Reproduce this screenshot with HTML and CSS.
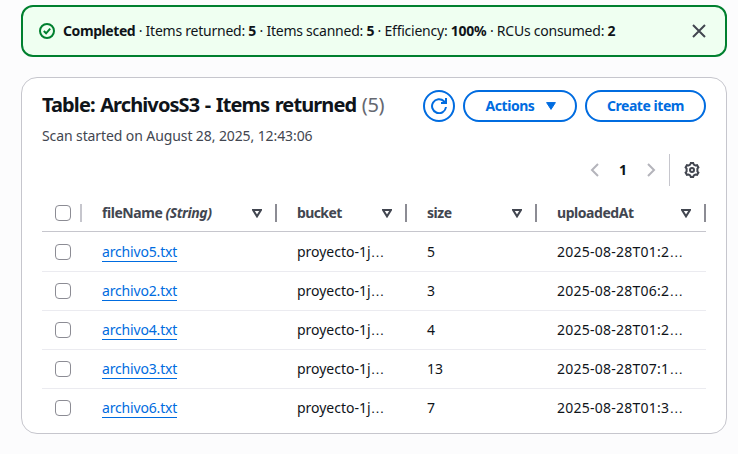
FILE: index.html
```html
<!DOCTYPE html>
<html lang="en">
<head>
<meta charset="utf-8">
<title>Table: ArchivosS3</title>
<link rel="stylesheet" href="styles.css">
</head>
<body>
<section class="alert">
  <svg class="alert-icon" viewBox="0 0 16 16"><circle cx="8" cy="8" r="7"/><path d="M4.8 8l2.3 2.3 4.1-4.6"/></svg>
  <p class="alert-text"><b class="done">Completed</b> · Items returned: <b>5</b> · Items scanned: <b>5</b> · Efficiency: <b>100%</b> · RCUs consumed: <b>2</b></p>
  <svg class="close" viewBox="0 0 16 16"><path d="M2 2l12 12M14 2L2 14"/></svg>
</section>
<main class="panel">
  <header class="head">
    <div class="titles">
      <h1>Table: ArchivosS3 - Items returned <span class="count">(5)</span></h1>
      <p class="sub">Scan started on August 28, 2025, 12:43:06</p>
    </div>
    <div class="actions">
      <button class="btn refresh"><svg viewBox="0 0 16 16"><path d="M15 9a7 7 0 1 1-2-5.8L15 5M15 0v5h-5"/></svg></button>
      <button class="btn menu"><span>Actions</span><svg class="caret" viewBox="0 0 10 8"><path d="M.6.6h8.8L5 7.4z"/></svg></button>
      <button class="btn create"><span>Create item</span></button>
    </div>
  </header>
  <nav class="pager">
    <svg class="chev" viewBox="0 0 16 16"><path d="M11 2L5 8l6 6"/></svg>
    <b class="page">1</b>
    <svg class="chev" viewBox="0 0 16 16"><path d="M5 2l6 6-6 6"/></svg>
    <span class="rule"></span>
    <svg class="gear" viewBox="0 0 16 16"><path d="M6.2 2.5L6.8 1h2.4l.6 1.5 1.7 1 1.6-.3 1.3 2.2-1 1.2v2.8l1 1.2-1.3 2.2-1.6-.3-1.7 1L9.2 15H6.8l-.6-1.5-1.7-1-1.6.3-1.3-2.2 1-1.2V6.6l-1-1.2 1.3-2.2 1.6.3z"/><circle cx="8" cy="8" r="2"/></svg>
  </nav>
  <div class="table">
    <div class="row th">
      <div class="cell pick"><span class="box"></span></div>
      <div class="cell"><span>fileName <i>(String)</i></span><svg class="sort" viewBox="0 0 10 9"><path d="M1 1h8L5 7.4z"/></svg></div>
      <div class="cell"><span class="tight">bucket</span><svg class="sort" viewBox="0 0 10 9"><path d="M1 1h8L5 7.4z"/></svg></div>
      <div class="cell"><span>size</span><svg class="sort" viewBox="0 0 10 9"><path d="M1 1h8L5 7.4z"/></svg></div>
      <div class="cell"><span>uploadedAt</span><svg class="sort" viewBox="0 0 10 9"><path d="M1 1h8L5 7.4z"/></svg></div>
    </div>
    <div class="row first"><div class="cell pick"><span class="box"></span></div><div class="cell"><a>archivo5.txt</a></div><div class="cell proj">proyecto-1j<span class="dots">…</span></div><div class="cell">5</div><div class="cell date">2025-08-28T01:2<span class="dots">…</span></div></div>
    <div class="row"><div class="cell pick"><span class="box"></span></div><div class="cell"><a>archivo2.txt</a></div><div class="cell proj">proyecto-1j<span class="dots">…</span></div><div class="cell">3</div><div class="cell date">2025-08-28T06:2<span class="dots">…</span></div></div>
    <div class="row"><div class="cell pick"><span class="box"></span></div><div class="cell"><a>archivo4.txt</a></div><div class="cell proj">proyecto-1j<span class="dots">…</span></div><div class="cell">4</div><div class="cell date">2025-08-28T01:2<span class="dots">…</span></div></div>
    <div class="row"><div class="cell pick"><span class="box"></span></div><div class="cell"><a>archivo3.txt</a></div><div class="cell proj">proyecto-1j<span class="dots">…</span></div><div class="cell">13</div><div class="cell date">2025-08-28T07:1<span class="dots">…</span></div></div>
    <div class="row"><div class="cell pick"><span class="box"></span></div><div class="cell"><a>archivo6.txt</a></div><div class="cell proj">proyecto-1j<span class="dots">…</span></div><div class="cell">7</div><div class="cell date">2025-08-28T01:3<span class="dots">…</span></div></div>
  </div>
</main>
</body>
</html>
```
FILE: styles.css
```css
* { box-sizing: border-box; }
body {
  margin: 0;
  padding: 5px 11px 0 21px;
  height: 454px;
  overflow: hidden;
  background: #fcfcfd;
  color: #0f141a;
  font: 14px/20px "Noto Sans", sans-serif;
}
h1, p { margin: 0; }
svg { display: block; flex: none; fill: none; stroke: currentColor; stroke-width: 2; }
.alert {
  display: flex;
  align-items: center;
  height: 52px;
  padding: 0 18px 0 16px;
  border: 2px solid #00802f;
  border-radius: 12px;
  background: #effff1;
}
.alert-icon { width: 16px; height: 16px; color: #00802f; }
.alert-text { flex: 1; margin-left: 8px; white-space: nowrap; letter-spacing: -0.24px; }
.done { letter-spacing: -0.42px; }
.close { width: 16px; height: 16px; color: #424650; }
.panel {
  height: 357px;
  margin-top: 20px;
  padding: 12px 20px 0;
  border: 1px solid #c6c6cd;
  border-radius: 16px;
  background: #fff;
}
.head { display: flex; justify-content: space-between; height: 61px; white-space: nowrap; }
h1 { padding-top: 3px; font-size: 20px; line-height: 24px; font-weight: 700; letter-spacing: -0.9px; word-spacing: 1.2px; }
.count { color: #656871; font-weight: 400; letter-spacing: -0.3px; }
.sub { margin-top: 9px; color: #424650; letter-spacing: -0.1px; }
.actions { display: flex; gap: 8px; }
.btn {
  display: flex;
  align-items: center;
  justify-content: center;
  height: 32px;
  padding: 0;
  border: 2px solid #006ce0;
  border-radius: 16px;
  background: #fff;
  color: #006ce0;
  font: 700 14px/20px "Noto Sans", sans-serif;
  letter-spacing: -0.45px;
}
.refresh { width: 32px; }
.refresh svg { width: 16px; height: 16px; }
.menu { width: 114px; gap: 12px; padding-left: 2px; }
.caret { width: 10px; height: 8px; fill: currentColor; stroke-linejoin: round; stroke-width: 1; }
.create { width: 121px; }
.pager { display: flex; align-items: center; height: 32px; margin-top: 3px; padding-right: 6px; justify-content: flex-end; }
.chev { width: 16px; height: 16px; color: #b4b4bb; }
.page { width: 40px; text-align: center; }
.rule { width: 1px; height: 32px; margin: 0 14px 0 10px; background: #c6c6cd; }
.gear { width: 16px; height: 16px; color: #424650; }
.table { margin-top: 8px; }
.row { display: grid; grid-template-columns: 40px 195px 130px 130px 169px; height: 39px; border-bottom: 1px solid #ebebf0; }
.first { height: 40px; }
.row:last-child { border-color: transparent; }
.cell { display: flex; align-items: center; padding-left: 20px; white-space: nowrap; }
.cell.pick { padding: 0 0 0 13px; }
.box { flex: none; width: 16px; height: 16px; border: 1px solid #8c8c94; border-radius: 4px; background: #fff; }
.th { height: 38px; border-color: #c6c6cd; color: #424650; font-weight: 700; letter-spacing: -0.45px; }
.th .cell { align-self: start; height: 18px; justify-content: space-between; padding-right: 13px; border-right: 2px solid #8c8c94; margin-top: 10px; }
.th .cell.pick { padding: 0 0 0 13px; border-color: #c6c6cd; }
.tight { letter-spacing: -0.6px; }
.sort { width: 10px; height: 9px; }
.proj { letter-spacing: -0.02px; }
.date { letter-spacing: 0.24px; }
.dots { font-family: "Liberation Sans", sans-serif; }
a { color: #006ce0; border-bottom: 1px solid #006ce0; line-height: 18px; margin-top: 1px; letter-spacing: -0.17px; }
```
